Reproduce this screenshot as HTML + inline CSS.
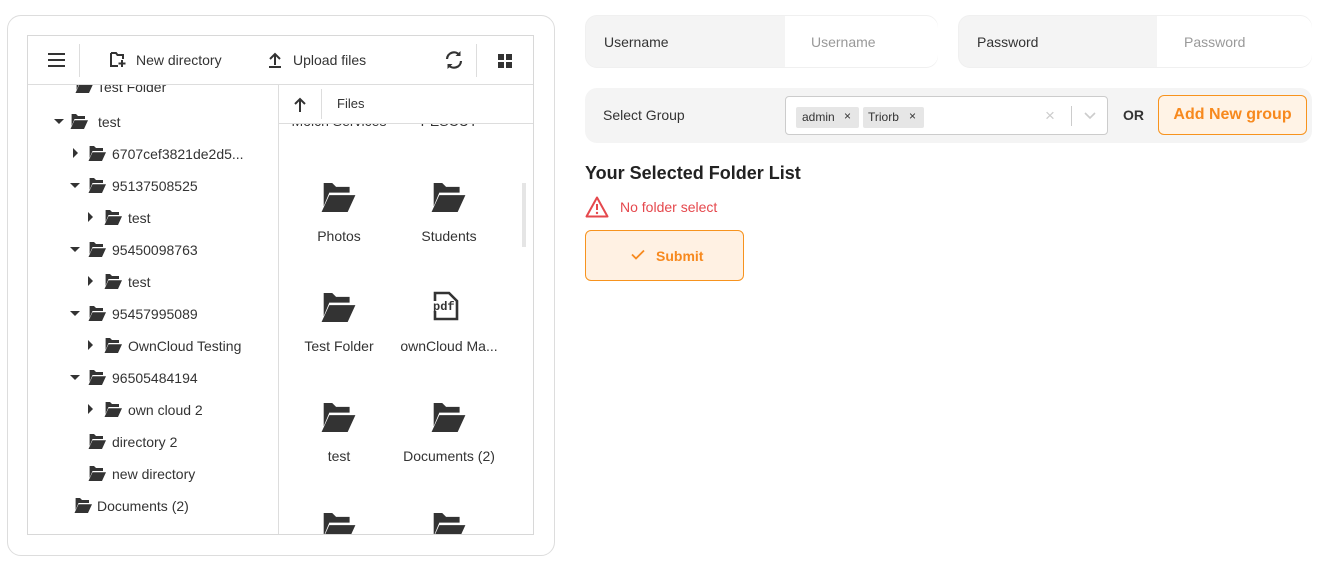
<!DOCTYPE html>
<html><head><meta charset="utf-8"><style>
*{box-sizing:border-box;margin:0;padding:0}
body{width:1339px;height:564px;background:#fff;font-family:"Liberation Sans",sans-serif;color:#333;position:relative;overflow:hidden;font-size:14px}
.abs{position:absolute}
.card{left:7px;top:15px;width:548px;height:541px;border:1px solid #ddd;border-radius:14px}
.box{left:27px;top:35px;width:507px;height:500px;border:1px solid #d8d8d8;overflow:hidden}
.tb{left:0;top:0;width:505px;height:49px;border-bottom:1px solid #ddd;background:#fff;z-index:3}
.t{position:absolute;font-size:14px;color:#333;white-space:nowrap}
.tree{left:0;top:49px;width:251px;height:450px;border-right:1px solid #ddd;overflow:hidden}
.row{position:absolute;height:20px;line-height:20px;font-size:14px;white-space:nowrap}
.arr{position:absolute;width:0;height:0}
.ad{border-left:5px solid transparent;border-right:5px solid transparent;border-top:5px solid #333}
.ar{border-top:5px solid transparent;border-bottom:5px solid transparent;border-left:5px solid #333}
.grid{left:251px;top:49px;width:254px;height:450px;overflow:hidden}
.gi{position:absolute;width:110px;text-align:center;font-size:14px}
.pill{background:#f4f4f4;border-radius:12px}
</style></head><body>
<svg width="0" height="0" style="position:absolute"><defs>
<symbol id="f" viewBox="0 0 18 15"><path d="M0 0h6l2 2h7v3H4.5L1.6 12V0z M0.5 15 L4.5 6.3h13.5l-4 8.7z" fill="#333"/></symbol>
</defs></svg>
<div class="abs card"></div>
<div class="abs box">
 <div class="abs tb">
  <svg class="abs" style="left:20px;top:17px" width="17" height="14"><path d="M0 1h17M0 7h17M0 13h17" stroke="#333" stroke-width="2"/></svg>
  <div class="abs" style="left:51px;top:8px;width:1px;height:33px;background:#ddd"></div>
  <svg class="abs" style="left:82px;top:16px" width="16" height="16"><path d="M1 1h5l1.5 2H13v4M1 1v13h7" stroke="#333" stroke-width="2" fill="none"/><path d="M12 8v7M8.5 11.5h7" stroke="#333" stroke-width="2"/></svg>
  <div class="t" style="left:108px;top:16px">New directory</div>
  <svg class="abs" style="left:240px;top:16px" width="14" height="16"><path d="M7 13V2M2 7l5-5 5 5M1 15h12" stroke="#333" stroke-width="2" fill="none"/></svg>
  <div class="t" style="left:265px;top:16px">Upload files</div>
  <svg class="abs" style="left:416px;top:14px" width="20" height="20" viewBox="0 0 20 20"><path d="M3 9a7 7 0 0 1 12.5-4M17 11a7 7 0 0 1-12.5 4" stroke="#333" stroke-width="2.2" fill="none"/><path d="M16.5 1v5h-5zM3.5 19v-5h5z" fill="#333"/></svg>
  <div class="abs" style="left:448px;top:8px;width:1px;height:33px;background:#ddd"></div>
  <svg class="abs" style="left:470px;top:18px" width="14" height="14"><rect x="0" y="0" width="6" height="6" fill="#333"/><rect x="8" y="0" width="6" height="6" fill="#333"/><rect x="0" y="8" width="6" height="6" fill="#333"/><rect x="8" y="8" width="6" height="6" fill="#333"/></svg>
 </div>
 <div class="abs tree">
  <svg class="abs" style="left:47px;top:-7px" width="18" height="15"><use href="#f"/></svg><div class="row" style="left:69px;top:-8px">Test Folder</div>
  <div class="arr ad" style="left:26px;top:34px"></div><svg class="abs" style="left:42px;top:29px" width="18" height="15"><use href="#f"/></svg><div class="row" style="left:70px;top:27px">test</div>
  <div class="arr ar" style="left:45px;top:63px"></div><svg class="abs" style="left:60px;top:61px" width="18" height="15"><use href="#f"/></svg><div class="row" style="left:84px;top:59px">6707cef3821de2d5...</div>
  <div class="arr ad" style="left:42px;top:98px"></div><svg class="abs" style="left:60px;top:93px" width="18" height="15"><use href="#f"/></svg><div class="row" style="left:84px;top:91px">95137508525</div>
  <div class="arr ar" style="left:60px;top:127px"></div><svg class="abs" style="left:76px;top:125px" width="18" height="15"><use href="#f"/></svg><div class="row" style="left:100px;top:123px">test</div>
  <div class="arr ad" style="left:42px;top:162px"></div><svg class="abs" style="left:60px;top:157px" width="18" height="15"><use href="#f"/></svg><div class="row" style="left:84px;top:155px">95450098763</div>
  <div class="arr ar" style="left:60px;top:191px"></div><svg class="abs" style="left:76px;top:189px" width="18" height="15"><use href="#f"/></svg><div class="row" style="left:100px;top:187px">test</div>
  <div class="arr ad" style="left:42px;top:226px"></div><svg class="abs" style="left:60px;top:221px" width="18" height="15"><use href="#f"/></svg><div class="row" style="left:84px;top:219px">95457995089</div>
  <div class="arr ar" style="left:60px;top:255px"></div><svg class="abs" style="left:76px;top:253px" width="18" height="15"><use href="#f"/></svg><div class="row" style="left:100px;top:251px">OwnCloud Testing</div>
  <div class="arr ad" style="left:42px;top:290px"></div><svg class="abs" style="left:60px;top:285px" width="18" height="15"><use href="#f"/></svg><div class="row" style="left:84px;top:283px">96505484194</div>
  <div class="arr ar" style="left:60px;top:319px"></div><svg class="abs" style="left:76px;top:317px" width="18" height="15"><use href="#f"/></svg><div class="row" style="left:100px;top:315px">own cloud 2</div>
  <svg class="abs" style="left:60px;top:349px" width="18" height="15"><use href="#f"/></svg><div class="row" style="left:84px;top:347px">directory 2</div>
  <svg class="abs" style="left:60px;top:381px" width="18" height="15"><use href="#f"/></svg><div class="row" style="left:84px;top:379px">new directory</div>
  <svg class="abs" style="left:46px;top:413px" width="18" height="15"><use href="#f"/></svg><div class="row" style="left:69px;top:411px">Documents (2)</div>
 </div>
 <div class="abs grid">
  <div class="abs" style="left:0;top:0;width:254px;height:39px;border-bottom:1px solid #ddd;background:#fff;z-index:2">
   <svg class="abs" style="left:15px;top:12px" width="12" height="15"><path d="M6 15V2M1 7l5-5 5 5" stroke="#333" stroke-width="2" fill="none"/></svg>
   <div class="abs" style="left:42px;top:4px;width:1px;height:30px;background:#ddd"></div>
   <div class="t" style="left:58px;top:11px;font-size:13px">Files</div>
  </div>
  <div class="gi" style="left:5px;top:28px">Molch Services</div><div class="gi" style="left:115px;top:28px">PESCUT</div>
  <div class="abs" style="left:243px;top:98px;width:4px;height:64px;background:#e5e5e5"></div>
  <svg class="abs" style="left:41px;top:98px" width="36" height="29"><use href="#f"/></svg><div class="gi" style="left:5px;top:143px">Photos</div>
  <svg class="abs" style="left:151px;top:98px" width="36" height="29"><use href="#f"/></svg><div class="gi" style="left:115px;top:143px">Students</div>
  <svg class="abs" style="left:41px;top:208px" width="36" height="29"><use href="#f"/></svg><div class="gi" style="left:5px;top:253px">Test Folder</div>
  <svg class="abs" style="left:154px;top:206px" width="26" height="30" viewBox="0 0 26 30"><path d="M2 10V2h14l8 8v18H2v-8" stroke="#333" stroke-width="2.6" fill="none"/><text x="0" y="19" font-family="Liberation Mono" font-weight="bold" font-size="12" fill="#333">pdf</text></svg>
  <div class="gi" style="left:115px;top:253px">ownCloud Ma...</div>
  <svg class="abs" style="left:41px;top:318px" width="36" height="29"><use href="#f"/></svg><div class="gi" style="left:5px;top:363px">test</div>
  <svg class="abs" style="left:151px;top:318px" width="36" height="29"><use href="#f"/></svg><div class="gi" style="left:115px;top:363px">Documents (2)</div>
  <svg class="abs" style="left:41px;top:428px" width="36" height="29"><use href="#f"/></svg>
  <svg class="abs" style="left:151px;top:428px" width="36" height="29"><use href="#f"/></svg>
 </div>
</div>

<div class="abs pill" style="left:585px;top:15px;width:353px;height:53px;border:1px solid #f0f0f0"><div class="abs" style="left:199px;top:0;width:153px;height:51px;background:#fff;border-radius:0 12px 12px 0"></div>
<div class="t" style="left:18px;top:18px">Username</div><div class="t" style="left:225px;top:18px;color:#999">Username</div></div>
<div class="abs pill" style="left:958px;top:15px;width:354px;height:53px;border:1px solid #f0f0f0"><div class="abs" style="left:198px;top:0;width:155px;height:51px;background:#fff;border-radius:0 12px 12px 0"></div>
<div class="t" style="left:18px;top:18px">Password</div><div class="t" style="left:225px;top:18px;color:#999">Password</div></div>

<div class="abs pill" style="left:585px;top:88px;width:727px;height:55px"></div>
<div class="t" style="left:603px;top:107px">Select Group</div>
<div class="abs" style="left:785px;top:96px;width:323px;height:39px;border:1px solid #ccc;border-radius:4px;background:#fff">
 <div class="abs" style="left:10px;top:10px;width:63px;height:21px;background:#e6e6e6;border-radius:2px"><span class="t" style="left:6px;top:3px;font-size:12px">admin</span><span class="t" style="left:48px;top:2px;font-size:12px">×</span></div>
 <div class="abs" style="left:77px;top:10px;width:61px;height:21px;background:#e6e6e6;border-radius:2px"><span class="t" style="left:5px;top:3px;font-size:12px">Triorb</span><span class="t" style="left:46px;top:2px;font-size:12px">×</span></div>
 <div class="t" style="left:259px;top:9px;color:#ccc;font-size:17px">×</div>
 <div class="abs" style="left:285px;top:9px;width:1px;height:20px;background:#ccc"></div>
 <svg class="abs" style="left:298px;top:15px" width="12" height="8"><path d="M1 1l5 5 5-5" stroke="#ccc" stroke-width="1.6" fill="none"/></svg>
</div>
<div class="t" style="left:1123px;top:107px;font-weight:bold">OR</div>
<div class="abs" style="left:1158px;top:95px;width:149px;height:40px;border:1px solid #f7931e;border-radius:6px;background:#fff3e6;color:#f7891e;font-weight:bold;font-size:16px;text-align:center;line-height:38px">Add New group</div>
<div class="t" style="left:585px;top:163px;font-size:18px;font-weight:bold;color:#222">Your Selected Folder List</div>
<svg class="abs" style="left:585px;top:196px" width="24" height="22" viewBox="0 0 24 22"><path d="M12 1.5L1.5 20.5h21z" stroke="#e5484d" stroke-width="2" fill="none" stroke-linejoin="round"/><path d="M12 8v6" stroke="#e5484d" stroke-width="2"/><circle cx="12" cy="17" r="1.2" fill="#e5484d"/></svg>
<div class="t" style="left:620px;top:199px;color:#e5484d">No folder select</div>
<div class="abs" style="left:585px;top:230px;width:159px;height:51px;border:1px solid #f7931e;border-radius:6px;background:#fff1e3"></div>
<svg class="abs" style="left:631px;top:249px" width="14" height="11"><path d="M1 5.5l4 4 8-8" stroke="#f7891e" stroke-width="1.8" fill="none"/></svg>
<div class="t" style="left:656px;top:248px;color:#f7891e;font-weight:bold">Submit</div>
</body></html>
